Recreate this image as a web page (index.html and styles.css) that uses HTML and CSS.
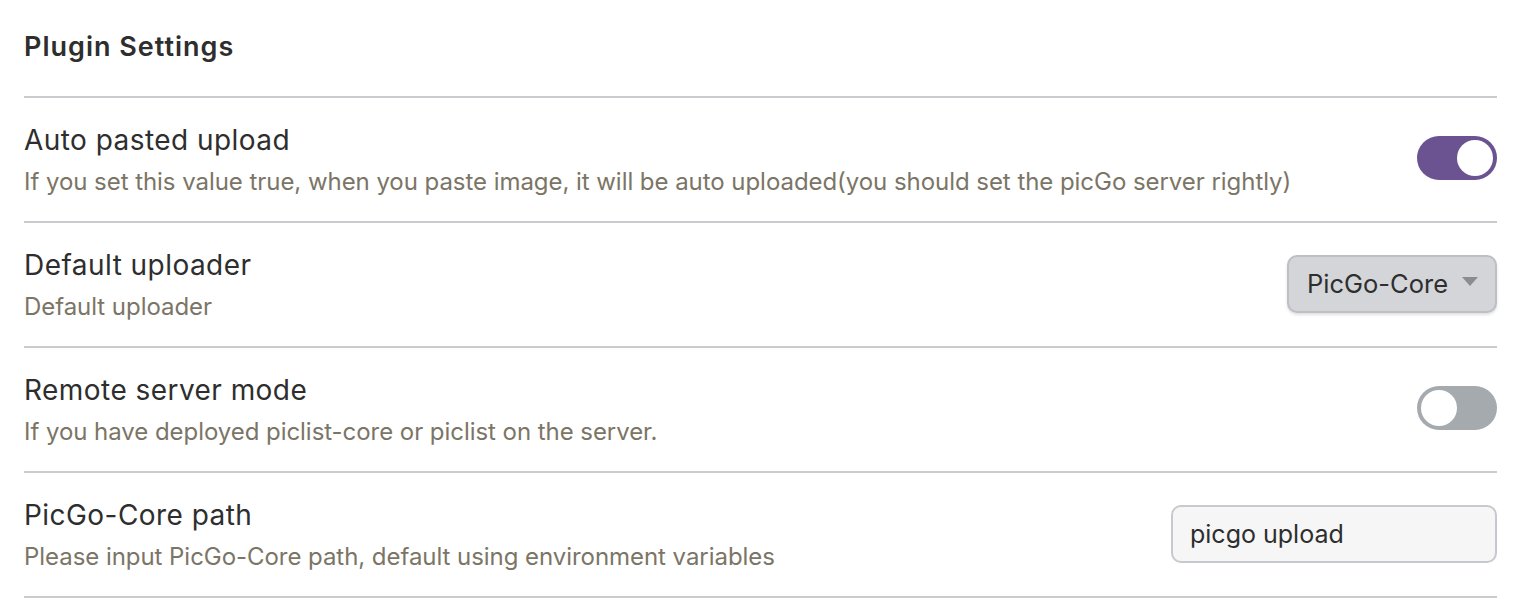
FILE: index.html
```html
<!DOCTYPE html>
<html>
<head>
<meta charset="utf-8">
<link rel="stylesheet" href="styles.css">
</head>
<body>
<div class="settings">
  <div class="heading">Plugin Settings</div>
  <div class="item">
    <div class="info">
      <div class="name">Auto pasted upload</div>
      <div class="desc">If you set this value true, when you paste image, it will be auto uploaded(you should set the picGo server rightly)</div>
    </div>
    <div class="control"><div class="toggle on"><div class="knob"></div></div></div>
  </div>
  <div class="item">
    <div class="info">
      <div class="name">Default uploader</div>
      <div class="desc">Default uploader</div>
    </div>
    <div class="control"><div class="dropdown"><span>PicGo-Core</span><span class="arrow"></span></div></div>
  </div>
  <div class="item">
    <div class="info">
      <div class="name">Remote server mode</div>
      <div class="desc">If you have deployed piclist-core or piclist on the server.</div>
    </div>
    <div class="control"><div class="toggle"><div class="knob"></div></div></div>
  </div>
  <div class="item last">
    <div class="info">
      <div class="name">PicGo-Core path</div>
      <div class="desc">Please input PicGo-Core path, default using environment variables</div>
    </div>
    <div class="control"><div class="textinput">picgo upload</div></div>
  </div>
</div>
</body>
</html>
```
FILE: styles.css
```css
html, body {
  margin: 0;
  padding: 0;
  background: #ffffff;
}
body {
  font-family: Inter, "Noto Sans", sans-serif;
  width: 1524px;
  height: 604px;
  overflow: hidden;
}
.settings {
  margin-left: 24px;
  width: 1473px;
}
.heading {
  height: 96px;
  box-sizing: border-box;
  display: flex;
  align-items: center;
  font-size: 27px;
  font-weight: 600;
  letter-spacing: 1px;
  color: #2e2e2e;
  padding-bottom: 4px;
}
.item {
  border-top: 2px solid #c9cbce;
  height: 125px;
  box-sizing: border-box;
  display: flex;
  align-items: center;
  justify-content: space-between;
}
.item.last {
  border-bottom: 2px solid #c9cbce;
  height: 127px;
}
.info {
  display: flex;
  flex-direction: column;
  gap: 10px;
  margin-top: 0;
}
.name {
  font-size: 28px;
  letter-spacing: 0.45px;
  color: #2e2e2e;
  line-height: 34px;
}
.desc {
  font-size: 24px;
  letter-spacing: -0.05px;
  color: #7b7566;
  line-height: 30px;
}
.toggle {
  width: 80px;
  height: 44px;
  border-radius: 22px;
  background: #a5aaae;
  box-sizing: border-box;
  padding: 4px;
  display: flex;
  justify-content: flex-start;
  margin-top: -4px;
}
.toggle.on {
  background: #6a5390;
  justify-content: flex-end;
}
.knob {
  width: 36px;
  height: 36px;
  border-radius: 50%;
  background: #ffffff;
}
.dropdown {
  width: 210px;
  height: 58px;
  box-sizing: border-box;
  background: #d3d5d8;
  border: 2px solid #bcbfc3;
  border-radius: 10px;
  box-shadow: 0 2px 3px rgba(0,0,0,0.12);
  display: flex;
  align-items: center;
  justify-content: space-between;
  padding: 0 17px 0 18px;
  font-size: 25.5px;
  color: #2e2e2e;
  margin-top: -2px;
}
.arrow {
  width: 0;
  height: 0;
  border-left: 8px solid transparent;
  border-right: 8px solid transparent;
  border-top: 9px solid #8a8c8f;
  margin-top: -4px;
}
.textinput {
  width: 326px;
  height: 58px;
  box-sizing: border-box;
  background: #f6f6f6;
  border: 2px solid #c6c9cd;
  border-radius: 10px;
  display: flex;
  align-items: center;
  padding-left: 17px;
  font-size: 25px;
  color: #2e2e2e;
  margin-top: -2px;
}
```
